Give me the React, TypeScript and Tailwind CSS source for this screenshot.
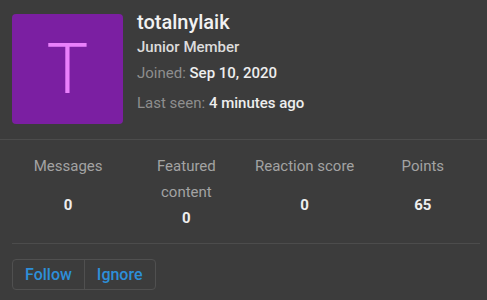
import React from "react";

const stats: { label: string; value: string }[] = [
  { label: "Messages", value: "0" },
  { label: "Featured content", value: "0" },
  { label: "Reaction score", value: "0" },
  { label: "Points", value: "65" },
];

export default function App() {
  return (
    <div
      className="h-[300px] w-[487px] overflow-hidden bg-[#3c3c3c] text-[#e6e6e6]"
      style={{ fontFamily: "Roboto, 'Noto Sans', sans-serif" }}
    >
      {/* header */}
      <div className="flex gap-[14px] pl-3 pt-2 pb-[15px]">
        <div className="mt-[6px] flex h-[110px] w-[111px] shrink-0 items-center justify-center rounded-[4px] bg-[#7b1fa2]">
          <span className="text-[70px] font-light leading-none text-[#ea80fc]">T</span>
        </div>
        <div className="flex flex-col">
          <h1 className="text-[20px] font-medium leading-[28px] text-[#f2f2f2]">totalnylaik</h1>
          <p className="text-[15px] font-medium leading-[22px] text-[#dcdcdc]">Junior Member</p>
          <p className="mt-1 text-[15px] leading-[22px] text-[#8e8e8e]">
            Joined: <span className="font-medium text-[#eeeeee]">Sep 10, 2020</span>
          </p>
          <p className="mt-2 text-[15px] leading-[22px] text-[#8e8e8e]">
            Last seen: <span className="font-medium text-[#eeeeee]">4 minutes ago</span>
          </p>
        </div>
      </div>

      <div className="h-px bg-[#4c4c4c]" />

      {/* stats */}
      <div className="grid grid-cols-4 pl-[9px] pr-[5px] pt-[13px] pb-[12px]">
        {stats.map((s) => (
          <dl key={s.label} className="flex flex-col px-1 text-center">
            <dt className="text-[15px] leading-[26px] text-[#a3a3a3]">{s.label}</dt>
            <dd className="flex min-h-[26px] flex-1 items-center justify-center text-[15px] font-bold text-[#eeeeee]">
              {s.value}
            </dd>
          </dl>
        ))}
      </div>

      <div className="ml-3 mr-[7px] h-px bg-[#4c4c4c]" />

      {/* actions */}
      <div className="pl-3 pt-[15px]">
        <div className="inline-flex h-[31px] overflow-hidden rounded-[4px] border border-[#505050]">
          <button className="px-3 text-[16px] font-medium text-[#2d8fd9]">Follow</button>
          <button className="border-l border-[#505050] px-3 text-[16px] font-medium text-[#2d8fd9]">
            Ignore
          </button>
        </div>
      </div>
    </div>
  );
}
